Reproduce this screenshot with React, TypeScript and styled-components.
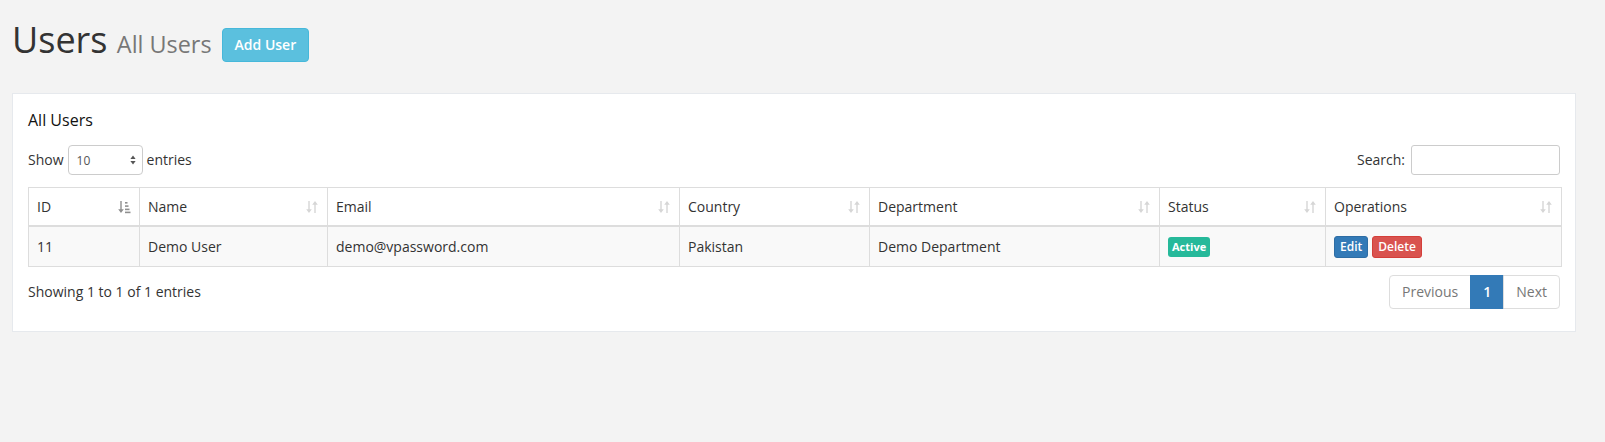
import styled, { createGlobalStyle } from "styled-components";

const GlobalStyle = createGlobalStyle`
  * { box-sizing: border-box; }
  body {
    margin: 0;
    background: #f3f3f3;
    font-family: "Open Sans", "Liberation Sans", Arial, sans-serif;
    font-size: 14px;
    line-height: 1.42857;
    color: #333;
  }
`;

const Page = styled.div`
  padding: 20px 29px 20px 12px;
`;

const PageHeader = styled.div`
  display: flex;
  align-items: flex-start;
  gap: 10px;
  margin-bottom: 31px;
`;

const Title = styled.h1`
  margin: 0;
  font-size: 36px;
  line-height: 1.1;
  font-weight: 400;
  color: #333;
  small {
    font-size: 65%;
    color: #777;
  }
`;

const Button = styled.button<{ $bg: string; $border: string; $size?: "xs" }>`
  font-family: inherit;
  font-weight: 600;
  color: #fff;
  background: ${(p) => p.$bg};
  border: 1px solid ${(p) => p.$border};
  border-radius: ${(p) => (p.$size === "xs" ? "3px" : "4px")};
  font-size: ${(p) => (p.$size === "xs" ? "12px" : "14px")};
  line-height: ${(p) => (p.$size === "xs" ? "18px" : "20px")};
  padding: ${(p) => (p.$size === "xs" ? "1px 5px" : "6px 12px")};
  cursor: pointer;
`;

const AddButton = styled(Button)`
  margin-top: 8px;
`;

const Panel = styled.section`
  background: #fff;
  border: 1px solid #e6e9ed;
  padding: 15px 15px 22px;
`;

const PanelTitle = styled.h2`
  margin: 0;
  font-size: 16px;
  font-weight: 400;
  line-height: 23px;
  color: #111;
`;

const Controls = styled.div`
  display: flex;
  justify-content: space-between;
  align-items: center;
  margin-top: 13px;
  height: 30px;
`;

const Label = styled.label`
  display: flex;
  align-items: center;
  gap: 4px;
`;

const SelectWrap = styled.span`
  position: relative;
  display: inline-block;
  svg {
    position: absolute;
    right: 7px;
    top: 10px;
    pointer-events: none;
    color: #555;
  }
`;

const Select = styled.select`
  appearance: none;
  width: 75px;
  height: 30px;
  padding: 0 8px;
  font-family: inherit;
  font-size: 12px;
  color: #555;
  background: #fff;
  border: 1px solid #ccc;
  border-radius: 4px;
`;

const SearchInput = styled.input`
  width: 149px;
  height: 30px;
  margin-left: 2px;
  border: 1px solid #ccc;
  border-radius: 3px;
  font-family: inherit;
  font-size: 12px;
  padding: 0 8px;
`;

const Table = styled.table`
  width: 100%;
  margin-top: 12px;
  border-collapse: collapse;
  table-layout: fixed;
  th,
  td {
    border: 1px solid #ddd;
    padding: 8px;
    text-align: left;
    vertical-align: middle;
    font-weight: 400;
  }
  thead th {
    padding: 9px 8px 8px;
    border-bottom-width: 2px;
  }
  tbody td {
    padding: 9px 8px 8px;
  }
  tbody tr {
    background: #f9f9f9;
  }
`;

const HeadCell = styled.div`
  display: flex;
  justify-content: space-between;
  align-items: center;
`;

const SortIcon = styled.svg<{ $active?: boolean }>`
  flex: none;
  color: ${(p) => (p.$active ? "#8f8f8f" : "#d6d6d6")};
`;

const Badge = styled.span`
  display: inline-block;
  background: #26b99a;
  color: #fff;
  font-size: 11px;
  font-weight: 700;
  line-height: 12px;
  padding: 4px 4px;
  border-radius: 3px;
`;

const Ops = styled.div`
  display: flex;
  gap: 4px;
`;

const Footer = styled.div`
  display: flex;
  justify-content: space-between;
  align-items: center;
  margin-top: 8px;
`;

const Pager = styled.ul`
  display: flex;
  list-style: none;
  margin: 0;
  padding: 0;
`;

const PageItem = styled.li<{ $active?: boolean }>`
  padding: 6px 12px;
  line-height: 20px;
  border: 1px solid ${(p) => (p.$active ? "#337ab7" : "#ddd")};
  margin-left: -1px;
  background: ${(p) => (p.$active ? "#337ab7" : "#fff")};
  color: ${(p) => (p.$active ? "#fff" : "#777")};
  font-weight: ${(p) => (p.$active ? 600 : 400)};
  &:first-child {
    border-radius: 4px 0 0 4px;
  }
  &:last-child {
    border-radius: 0 4px 4px 0;
  }
`;

const SortBoth = () => (
  <SortIcon width="14" height="14" viewBox="0 0 14 14" fill="currentColor">
    <path d="M3.3 1h1.4v8.2h2.1L4 13 1.2 9.2h2.1z" />
    <path d="M9.3 13h1.4V4.8h2.1L10 1 7.2 4.8h2.1z" />
  </SortIcon>
);

const SortAsc = () => (
  <SortIcon $active width="14" height="14" viewBox="0 0 14 14" fill="currentColor">
    <path d="M3.3 1h1.4v8.2h2.1L4 13 1.2 9.2h2.1z" />
    <rect x="8" y="2" width="2.5" height="1.6" />
    <rect x="8" y="5.3" width="3.5" height="1.6" />
    <rect x="8" y="8.6" width="4.5" height="1.6" />
    <rect x="8" y="11.6" width="5.5" height="1.6" />
  </SortIcon>
);

const columns = [
  { name: "ID", width: 111 },
  { name: "Name", width: 188 },
  { name: "Email", width: 352 },
  { name: "Country", width: 190 },
  { name: "Department", width: 290 },
  { name: "Status", width: 166 },
  { name: "Operations", width: 236 },
];

export default function App() {
  return (
    <Page>
      <GlobalStyle />
      <PageHeader>
        <Title>
          Users <small>All Users</small>
        </Title>
        <AddButton $bg="#5bc0de" $border="#46b8da">
          Add User
        </AddButton>
      </PageHeader>

      <Panel>
        <PanelTitle>All Users</PanelTitle>
        <Controls>
          <Label>
            Show
            <SelectWrap>
              <Select defaultValue="10">
                <option>10</option>
                <option>25</option>
                <option>50</option>
                <option>100</option>
              </Select>
              <svg width="6" height="10" viewBox="0 0 6 10" fill="currentColor">
                <path d="M3 0.5L5.6 4H0.4z" />
                <path d="M3 9.5L5.6 6H0.4z" />
              </svg>
            </SelectWrap>
            entries
          </Label>
          <Label>
            Search:
            <SearchInput type="search" />
          </Label>
        </Controls>

        <Table>
          <colgroup>
            {columns.map((c) => (
              <col key={c.name} style={{ width: c.width }} />
            ))}
          </colgroup>
          <thead>
            <tr>
              {columns.map((c, i) => (
                <th key={c.name}>
                  <HeadCell>
                    {c.name}
                    {i === 0 ? <SortAsc /> : <SortBoth />}
                  </HeadCell>
                </th>
              ))}
            </tr>
          </thead>
          <tbody>
            <tr>
              <td>11</td>
              <td>Demo User</td>
              <td>demo@vpassword.com</td>
              <td>Pakistan</td>
              <td>Demo Department</td>
              <td>
                <Badge>Active</Badge>
              </td>
              <td>
                <Ops>
                  <Button $size="xs" $bg="#337ab7" $border="#2e6da4">
                    Edit
                  </Button>
                  <Button $size="xs" $bg="#d9534f" $border="#d43f3a">
                    Delete
                  </Button>
                </Ops>
              </td>
            </tr>
          </tbody>
        </Table>

        <Footer>
          <span>Showing 1 to 1 of 1 entries</span>
          <Pager>
            <PageItem>Previous</PageItem>
            <PageItem $active>1</PageItem>
            <PageItem>Next</PageItem>
          </Pager>
        </Footer>
      </Panel>
    </Page>
  );
}
